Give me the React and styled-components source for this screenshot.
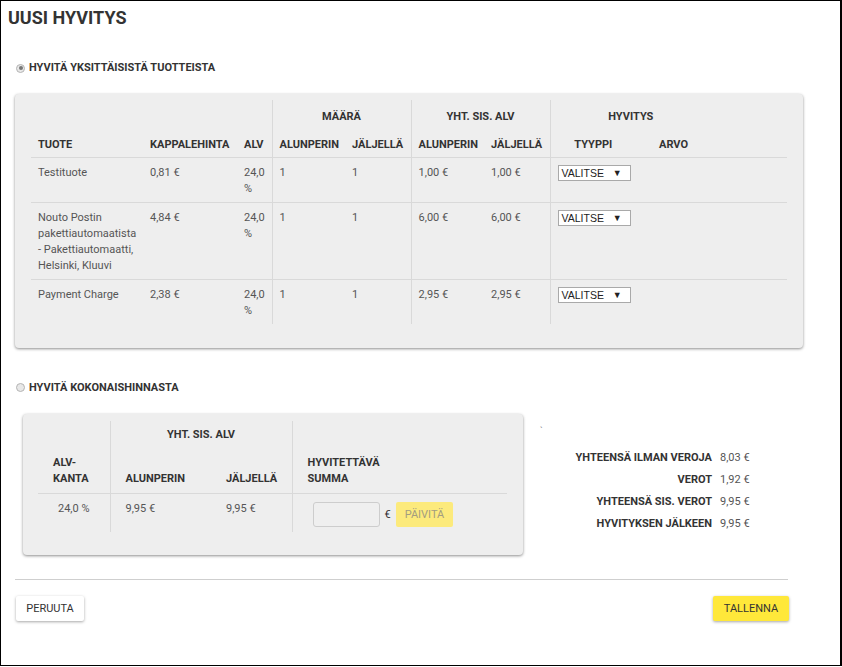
import React from "react";
import styled, { createGlobalStyle } from "styled-components";

const Global = createGlobalStyle`
  html, body { margin: 0; padding: 0; background: #fff; }
  body { font-family: Roboto, "Liberation Sans", sans-serif; color: #333; }
  * { box-sizing: border-box; }
`;

const Frame = styled.div`
  width: 842px;
  height: 666px;
  border: 1px solid #000;
  border-right-width: 2px;
  overflow: hidden;
`;

const Title = styled.h1`
  margin: 0;
  padding: 6px 7px 0;
  font-size: 18px;
  line-height: 22px;
  font-weight: 700;
  color: #333;
`;

const RadioRow = styled.label`
  display: flex;
  align-items: center;
  gap: 4px;
  margin-top: ${(p) => p.$top}px;
  padding-left: 15px;
  font-size: 11px;
  line-height: 16px;
  font-weight: 700;
  color: #333;
`;

const Radio = styled.span`
  width: 9px;
  height: 9px;
  border-radius: 50%;
  border: 1px solid #b4b4b4;
  background: #e8e8e8;
  display: flex;
  align-items: center;
  justify-content: center;
  &::after {
    content: "";
    width: 4px;
    height: 4px;
    border-radius: 50%;
    background: ${(p) => (p.$checked ? "#777" : "transparent")};
  }
`;

const Panel = styled.div`
  background: #eeeeee;
  border-radius: 4px;
  box-shadow: 0 1px 3px rgba(0, 0, 0, 0.45);
  flex-shrink: 0;
`;

const ProductPanel = styled(Panel)`
  margin: 18px 0 0 14px;
  width: 788px;
  padding: 6px 16px 24px;
`;

const Table = styled.table`
  border-collapse: collapse;
  table-layout: fixed;
  width: ${(p) => p.$w}px;
  font-size: 11px;
  line-height: 16px;
`;

const Col = styled.col`
  width: ${(p) => p.$w}px;
`;

const Th = styled.th`
  font-weight: 700;
  color: #333;
  text-align: ${(p) => p.$align || "left"};
  padding: 0 ${(p) => p.$pad ?? 7}px ${(p) => p.$bottom ?? 0}px;
  height: ${(p) => p.$h}px;
  vertical-align: ${(p) => (p.$bottom != null ? "bottom" : "middle")};
  border-left: ${(p) => (p.$sep ? "1px solid #d9d9d9" : "none")};
  white-space: nowrap;
`;

const HeadRow = styled.tr`
  border-bottom: ${(p) => (p.$line ? "1px solid #d9d9d9" : "none")};
`;

const BodyRow = styled.tr`
  border-bottom: 1px solid #d9d9d9;
  &:last-child { border-bottom: none; }
`;

const Td = styled.td`
  color: #555;
  vertical-align: top;
  padding: ${(p) => p.$padTop ?? 7}px ${(p) => p.$padR ?? 7}px 5px ${(p) => p.$padL ?? 7}px;
  text-align: ${(p) => p.$align || "left"};
  border-left: ${(p) => (p.$sep ? "1px solid #d9d9d9" : "none")};
`;

const SelectBox = styled.div`
  display: flex;
  align-items: center;
  justify-content: space-between;
  width: 73px;
  height: 16px;
  padding: 0 8px 0 3px;
  background: #fff;
  border: 1px solid #a9a9a9;
  font-family: "Liberation Sans", Arial, sans-serif;
  font-size: 10.5px;
  color: #222;
  span:last-child { font-size: 9px; }
`;

const BottomRow = styled.div`
  display: flex;
  margin-top: 18px;
`;

const TotalPanel = styled(Panel)`
  margin-left: 22px;
  width: 500px;
  padding: 7px 16px 23px 15px;
`;

const AmountCell = styled.div`
  display: flex;
  align-items: center;
  gap: 5px;
  padding-left: 5px;
  color: #333;
`;

const AmountInput = styled.input`
  width: 67px;
  height: 25px;
  border: 1px solid #cdcdcd;
  border-radius: 3px;
  background: #efefef;
  outline: none;
`;

const SmallButton = styled.button`
  height: 25px;
  padding: 0 9px;
  border: none;
  border-radius: 2px;
  background: #fcea7c;
  color: #a39d80;
  font-family: Roboto, sans-serif;
  font-size: 11px;
`;

const Summary = styled.div`
  margin-left: 9px;
  padding-top: 9px;
`;

const Tick = styled.div`
  padding-left: 8px;
  height: 16px;
  font-size: 9px;
  line-height: 16px;
  color: #888;
`;

const SummaryGrid = styled.div`
  display: grid;
  grid-template-columns: 180px auto;
  column-gap: 8px;
  margin-top: 8px;
  font-size: 11px;
  line-height: 22px;
`;

const SumLabel = styled.div`
  text-align: right;
  font-weight: 700;
  color: #333;
  white-space: nowrap;
`;

const SumValue = styled.div`
  color: #555;
  white-space: nowrap;
`;

const Divider = styled.hr`
  margin: 24px 0 0 14px;
  width: 773px;
  border: none;
  border-top: 1px solid #cfcfcf;
`;

const Actions = styled.div`
  display: flex;
  justify-content: space-between;
  width: 773px;
  margin: 16px 0 0 15px;
`;

const Button = styled.button`
  height: 25px;
  padding: 0 10px;
  border: none;
  border-radius: 2px;
  background: ${(p) => (p.$primary ? "#ffe83a" : "#fff")};
  box-shadow: 0 1px 3px rgba(0, 0, 0, 0.35);
  font-family: Roboto, sans-serif;
  font-size: 11px;
  color: #333;
  min-width: ${(p) => (p.$primary ? 76 : 68)}px;
`;

const products = [
  { name: "Testituote", price: "0,81 €", alv: "24,0 %", q1: "1", q2: "1", s1: "1,00 €", s2: "1,00 €" },
  {
    name: "Nouto Postin pakettiautomaatista - Pakettiautomaatti, Helsinki, Kluuvi",
    price: "4,84 €",
    alv: "24,0 %",
    q1: "1",
    q2: "1",
    s1: "6,00 €",
    s2: "6,00 €",
  },
  { name: "Payment Charge", price: "2,38 €", alv: "24,0 %", q1: "1", q2: "1", s1: "2,95 €", s2: "2,95 €" },
];

const totals = [
  ["YHTEENSÄ ILMAN VEROJA", "8,03 €"],
  ["VEROT", "1,92 €"],
  ["YHTEENSÄ SIS. VEROT", "9,95 €"],
  ["HYVITYKSEN JÄLKEEN", "9,95 €"],
];

const widths = [112, 94, 35, 73, 66, 73, 66, 86, 75, 76];

export default function App() {
  return (
    <Frame>
      <Global />
      <Title>UUSI HYVITYS</Title>

      <RadioRow $top={31}>
        <Radio $checked />
        HYVITÄ YKSITTÄISISTÄ TUOTTEISTA
      </RadioRow>

      <ProductPanel>
        <Table $w={756}>
          <colgroup>
            {widths.map((w, i) => (
              <Col key={i} $w={w} />
            ))}
          </colgroup>
          <thead>
            <HeadRow>
              <Th colSpan={3} $h={29} />
              <Th colSpan={2} $h={29} $bottom={4} $sep $align="center">MÄÄRÄ</Th>
              <Th colSpan={2} $h={29} $bottom={4} $sep $align="center">YHT. SIS. ALV</Th>
              <Th colSpan={2} $h={29} $bottom={4} $sep $align="center">HYVITYS</Th>
              <Th $h={29} />
            </HeadRow>
            <HeadRow $line>
              <Th $h={28} $bottom={4}>TUOTE</Th>
              <Th $h={28} $bottom={4}>KAPPALEHINTA</Th>
              <Th $h={28} $bottom={4}>ALV</Th>
              <Th $h={28} $bottom={4} $sep>ALUNPERIN</Th>
              <Th $h={28} $bottom={4}>JÄLJELLÄ</Th>
              <Th $h={28} $bottom={4} $sep>ALUNPERIN</Th>
              <Th $h={28} $bottom={4}>JÄLJELLÄ</Th>
              <Th $h={28} $bottom={4} $sep $align="center">TYYPPI</Th>
              <Th $h={28} $bottom={4} $align="center">ARVO</Th>
              <Th $h={28} />
            </HeadRow>
          </thead>
          <tbody>
            {products.map((p) => (
              <BodyRow key={p.name}>
                <Td $padR={3}>{p.name}</Td>
                <Td>{p.price}</Td>
                <Td $padR={2}>{p.alv}</Td>
                <Td $sep>{p.q1}</Td>
                <Td>{p.q2}</Td>
                <Td $sep>{p.s1}</Td>
                <Td>{p.s2}</Td>
                <Td $sep colSpan={2}>
                  <SelectBox>
                    <span>VALITSE</span>
                    <span>▼</span>
                  </SelectBox>
                </Td>
                <Td />
              </BodyRow>
            ))}
          </tbody>
        </Table>
      </ProductPanel>

      <RadioRow $top={32}>
        <Radio />
        HYVITÄ KOKONAISHINNASTA
      </RadioRow>

      <BottomRow>
        <TotalPanel>
          <Table $w={469}>
            <colgroup>
              <Col $w={72} />
              <Col $w={101} />
              <Col $w={81} />
              <Col $w={215} />
            </colgroup>
            <thead>
              <HeadRow>
                <Th $h={29} />
                <Th colSpan={2} $h={29} $sep $align="center">YHT. SIS. ALV</Th>
                <Th $h={29} $sep />
              </HeadRow>
              <HeadRow $line>
                <Th $h={44} $pad={15} $bottom={6}>
                  ALV-
                  <br />
                  KANTA
                </Th>
                <Th $h={44} $pad={15} $sep $bottom={6}>ALUNPERIN</Th>
                <Th $h={44} $pad={15} $bottom={6}>JÄLJELLÄ</Th>
                <Th $h={44} $pad={15} $sep $bottom={6}>
                  HYVITETTÄVÄ
                  <br />
                  SUMMA
                </Th>
              </HeadRow>
            </thead>
            <tbody>
              <BodyRow>
                <Td $align="center">24,0 %</Td>
                <Td $sep $padL={15}>9,95 €</Td>
                <Td $padL={15}>9,95 €</Td>
                <Td $sep $padTop={8} $padL={15}>
                  <AmountCell>
                    <AmountInput />
                    €
                    <SmallButton>PÄIVITÄ</SmallButton>
                  </AmountCell>
                </Td>
              </BodyRow>
            </tbody>
          </Table>
        </TotalPanel>

        <Summary>
          <Tick>`</Tick>
          <SummaryGrid>
            {totals.map(([label, value]) => (
              <React.Fragment key={label}>
                <SumLabel>{label}</SumLabel>
                <SumValue>{value}</SumValue>
              </React.Fragment>
            ))}
          </SummaryGrid>
        </Summary>
      </BottomRow>

      <Divider />

      <Actions>
        <Button>PERUUTA</Button>
        <Button $primary>TALLENNA</Button>
      </Actions>
    </Frame>
  );
}
